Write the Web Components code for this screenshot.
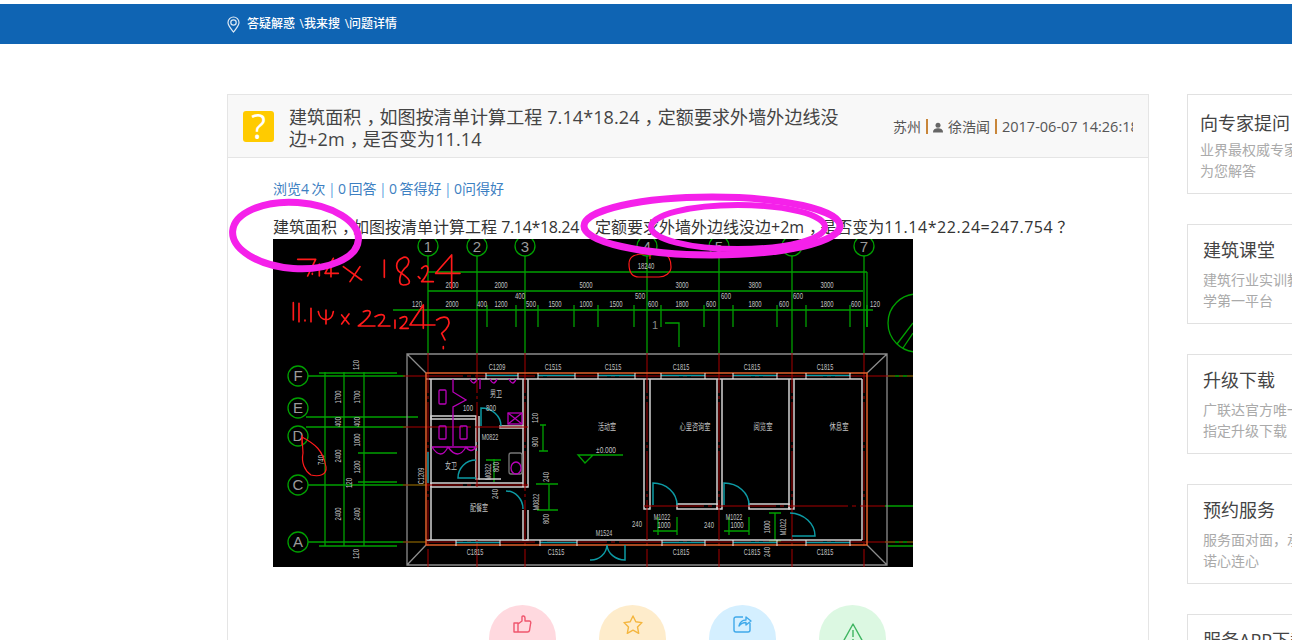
<!DOCTYPE html>
<html lang="zh-CN">
<head>
<meta charset="utf-8">
<title>问题详情</title>
<style>
  html, body { margin: 0; height: 640px; overflow: hidden; background: #fff; }
  body { font-family: "Open Sans", "Noto Sans CJK SC", sans-serif; }
  .page { display: flex; gap: 38px; padding: 50px 0 0 227px; }
  /* this site's full width punctuation sits in the middle of its box */
  .p { margin-left: 5px; margin-right: -5px; }
  .q { margin-left: 4px; margin-right: -4px; }
  .tight { letter-spacing: -.35px; }
  .wide { letter-spacing: .55px; }
</style>
</head>
<body>
<site-bar>答疑解惑 \我来搜 \问题详情</site-bar>
<div class="page">
  <question-card>
    <span slot="title">建筑面积<span class="p">，</span>如图按清单计算工程 7.14*18.24<span class="p">，</span>定额要求外墙外边线没边+2m<span class="p">，</span>是否变为11.14</span>
    <span slot="city">苏州</span>
    <span slot="user">徐浩闻</span>
    <span slot="date">2017-06-07 14:26:18</span>
    <span slot="body">建筑面积<span class="p">，</span>如图按清单计算工程 <span class="tight">7.14*18.24</span><span class="p">，</span>定额要求外墙外边线没边+2m<span class="p">，</span>是否变为<span class="wide">11.14*22.24=247.754</span><span class="q">？</span></span>
  </question-card>
  <side-list>
    <side-card style="--inset:12px;--top:16px"><span slot="title">向专家提问</span>业界最权威专家<br>为您解答</side-card>
    <side-card><span slot="title">建筑课堂</span>建筑行业实训教<br>学第一平台</side-card>
    <side-card><span slot="title">升级下载</span>广联达官方唯一<br>指定升级下载</side-card>
    <side-card><span slot="title">预约服务</span>服务面对面，承<br>诺心连心</side-card>
    <side-card><span slot="title">服务APP下载</span></side-card>
  </side-list>
</div>

<script>
class SiteBar extends HTMLElement {
  connectedCallback() {
    this.attachShadow({ mode: 'open' });
    this.shadowRoot.innerHTML = `
      <style>
        :host {
          display: flex;
          align-items: center;
          gap: 7px;
          height: 40px;
          margin-top: 4px;
          padding-left: 227px;
          background: #0f64b3;
          color: #fff;
          font: 500 12px/1 "Open Sans", "Noto Sans CJK SC", sans-serif;
          word-spacing: 1.500px;
        }
        svg { width: 13px; height: 17px; fill: none; stroke: #dfeaf5; stroke-width: 1.2; }
      </style>
      <svg viewBox="0 0 13 17">
        <path d="M6.5 16C4 12.5 1 9.800 1 6.500a5.500 5.500 0 0 1 11 0C12 9.800 9 12.500 6.500 16z"/>
        <circle cx="6.500" cy="6.500" r="2.700"/>
      </svg>
      <slot></slot>
    `;
  }
}
customElements.define('site-bar', SiteBar);

class StatLine extends HTMLElement {
  connectedCallback() {
    this.attachShadow({ mode: 'open' });
    this.shadowRoot.innerHTML = `
      <style>
        :host { display: block; color: #3d80c2; font-size: 14px; line-height: 20px; word-spacing: -1.200px; }
        i { font-style: normal; color: #5aa2e0; }
      </style>
      浏览4 次 <i>|</i> 0 回答 <i>|</i> 0 答得好 <i>|</i> 0问得好
    `;
  }
}
customElements.define('stat-line', StatLine);

// the floor plan from the question, drawn on its own 640x328 canvas
class CadDrawing extends HTMLElement {
  connectedCallback() {
    const G = '#00a000', W = '#d2d2d2', R = '#a80000', T = '#0d9aa4', M = '#b800b8', H = '#ff1a1a';
    const axes = [155, 204, 252, 374, 446, 519, 591];
    const rows = [['F', 137], ['E', 169], ['D', 197], ['C', 246], ['A', 303]];
    const label = (s, x, y, w, vert) => `<text x="${x}" y="${y + 3}" textLength="${w}" lengthAdjust="spacingAndGlyphs"${vert ? ` transform="rotate(-90 ${x} ${y})"` : ''}>${s}</text>`;
    const dims = [
      ['2000',179,46],['2000',228,46],['5000',313,46],['3000',409,46],['3800',482,46],['3000',554,46],
      ['120',144,65],['2000',179,65],['400',209,65],['1200',228,65],['500',258,65],['1500',282,65],['1000',313,65],['1500',343,65],
      ['600',380,65],['1800',409,65],['600',438,65],['1800',482,65],['600',511,65],['1800',554,65],['600',583,65],['120',602,65],
      ['400',247,57],['500',367,57],['600',453,57],['600',525,57],['18240',373,27],
      ['C1209',224,128],['C1515',280,128],['C1515',340,128],['C1815',408,128],['C1815',479,128],['C1815',552,128],
      ['C1815',202,313],['C1515',283,313],['C1815',408,313],['C1815',479,313],['C1815',552,313],
      ['M1022',389,278],['1000',391,286],['240',364,285],['M1022',461,278],['1000',464,286],['240',436,286],['M1524',331,294],
      ['M0822',217,198],['100',195,169],['800',218,169],['±0.000',333,211]
    ];
    const vdims = [
      ['120',83,126],['1700',65,158],['1700',84,158],['400',65,183],['400',84,183],['2400',65,217],['1000',84,201],['1200',84,228],
      ['120',76,244],['2400',65,275],['2400',84,275],['120',83,315],['740',48,221],['M0822',215,233],['800',223,228],['C1209',148,237],
      ['120',262,179],['900',262,203],['240',273,238],['240',222,255],['M0822',263,263],['800',273,280],['M1022',510,288],['1000',494,288],['240',494,313]
    ];
    const rooms = [['男卫',223,155,12],['女卫',178,227,12],['配餐室',206,269,18],['活动室',334,188,18],['心里咨询室',422,188,31],['阅览室',490,188,19],['休息室',566,188,19]];
    const ticks = [214, 243, 265, 301, 325, 361, 388, 431, 460, 504, 533, 577, 594];
    const windows = [[213,245,134],[265,302,134],[325,362,134],[388,432,134],[460,504,134],[533,577,134],[183,227,301],[267,304,301],[389,432,301],[460,504,301],[533,577,301]];
    this.attachShadow({ mode: 'open' });
    this.shadowRoot.innerHTML = `
      <style>
        :host { display: block; width: 640px; height: 328px; background: #000; overflow: hidden; }
        svg { display: block; }
        text { font: 9px "Liberation Sans", "Noto Sans CJK SC", sans-serif; fill: #c4c4c4; text-anchor: middle; }
        .big text { font-size: 15px; fill: #9a9a9a; }
      </style>
      <svg width="640" height="328" viewBox="0 0 640 328" fill="none">
        <g stroke="${G}" stroke-width="1.300">
          ${axes.map(x => `<circle cx="${x}" cy="7" r="10"/><path d="M${x} 17V114"/>`).join('')}
          <path d="M155 33H594M155 52H590M120 71H600M594 33V88"/>
          ${ticks.map(x => `<path d="M${x} 66V88"/>`).join('')}
          <path d="M392 84H406V108M52 133V307M71 133V307M91 133V307M46 134H124M35 137H132M46 307H124"/>
          <path d="M33 178H145M33 188H133M85 214H124M85 243H124M35 246H153M35 303H153"/>
          <path d="M615 137H640M612 267H640M612 303H640M615 307H640M267 186H273M270 186V212M266 212H275M263 245H285M276 245V271M264 271H285"/>
          <path d="M380 292H404M385 278V296M404 278V296M451 292H476M456 278V296M476 278V296M496 274H508M502 274V302M496 302H508"/>
          <path d="M221 220V243M213 221H228M350 216H305L312 224L320 216"/>
          <circle cx="644" cy="84" r="29"/><path d="M624 105L640 84M630 109L640 94"/>
        </g>
        <g class="big">
          ${axes.map((x, i) => `<text x="${x}" y="13">${i + 1}</text>`).join('')}
          ${rows.map(r => `<text x="25" y="${r[1] + 5}">${r[0]}</text>`).join('')}
        </g>
        <g stroke="${G}" stroke-width="1.300">${rows.map(r => `<circle cx="25" cy="${r[1]}" r="10"/>`).join('')}</g>
        <path d="M134 115H614V326H134ZM134 115L153 134M614 115L594 134M134 326L153 306M614 326L594 306" stroke="#8c8c8c" stroke-width="1.300"/>
        <g stroke="${W}" stroke-width="1.500">
          <path d="M158 140V301M589 140V301"/>
          <path d="M153 140H589M153 301H589"/>
          <path d="M371 140V270H377V140M444 140V270H449V140M516 140V270H521V140"/>
          <path d="M404 265H444V270H404ZM476 265H516V270H476Z"/>
          <path d="M158 244H250V248H158ZM250 140V248H255V140M250 271V301H255V271"/>
          <path d="M158 177H203V180H158ZM203 177V240H206V177M227 187H250V189H227Z"/>
          <path d="M206 240H228"/>
        </g>
        <g stroke="${R}" stroke-width="1">
          <path d="M155 114V328M252 114V328M204 114V248M204 301V328M374 114V328M446 114V328M519 114V328M591 114V328" stroke-dasharray="40 3 3 3"/>
          <path d="M130 137H640M130 188H255M130 246H255M130 303H640M371 267H612" stroke-dasharray="60 4 4 4"/>
        </g>
        <path d="M153 134H594V306H153Z" stroke="#e0602a" stroke-width="1.500"/>
        <g stroke="${T}" stroke-width="1.500">
          ${windows.map(w => `<path d="M${w[0]} ${w[2] + 2.500}H${w[1]}"/>`).join('')}
          <path d="M155 213V244"/>
          <path d="M380 266V244A24 22 0 0 1 404 266M451 266V244A25 22 0 0 1 476 266M517 274A26 23 0 0 1 542 297H519"/>
          <path d="M208 187V169A20 18 0 0 1 228 187M203 221A18 18 0 0 0 185 239H203M233 252A17 18 0 0 1 250 270"/>
          <path d="M334 306A16 16 0 0 1 317 321M334 306A18 16 0 0 0 352 321V306"/>
        </g>
        <g stroke="#e8e8e8" stroke-width="1">
          ${windows.map(w => `<path d="M${w[0]} ${w[2]}v6M${w[1]} ${w[2]}v6"/>`).join('')}
        </g>
        <g stroke="${M}" stroke-width="1.300">
          <rect x="166" y="151" width="7" height="14" rx="1"/><rect x="166" y="187" width="7" height="13" rx="1"/><rect x="187" y="187" width="7" height="13" rx="1"/>
          <path d="M180 140V153L193 161L180 168V180M180 180V207M159 208H203M159 208Q168 222 175 208Q185 222 193 208Q198 215 203 208"/>
          <path d="M197 140q4 8 7 0M217 140q4 8 7 0M236 140q4 8 7 0M207 140V150"/>
          <rect x="235" y="174" width="14" height="11"/><path d="M235 174L249 185M249 174L235 185"/>
          <rect x="236" y="214" width="13" height="21" rx="2" stroke="#777"/><ellipse cx="243" cy="229" rx="5" ry="6"/>
        </g>
        <g>
          ${dims.map(d => label(d[0], d[1], d[2], d[0].length * 3.300)).join('')}
          ${vdims.map(d => label(d[0], d[1], d[2], d[0].length * 3.300, true)).join('')}
          ${rooms.map(r => label(r[0], r[1], r[2], r[3])).join('')}
          <text x="382" y="90" style="font-size:11px;fill:#888">1</text>
        </g>
        <path d="M29 198C42 205 50 211 53 228C54 236 46 238 38 236C32 232 28 224 30 214Z" stroke="${H}" stroke-width="1.200"/>
        <path d="M29 196V206" stroke="${H}"/>
        <path d="M356 25C356 17 362 15 372 15H390C397 16 398 22 398 28C398 34 392 38 386 38H366C358 38 356 32 356 25ZM377 15V20" stroke="${H}" stroke-width="1.200"/>
        <g transform="translate(-48 -69) scale(.3333)" stroke="${H}" stroke-width="5" stroke-linecap="round" stroke-linejoin="round">
          <path d="M218 268H272L248 318M262 310v3M283 282V318M325 265L300 310H340M318 285V320M355 290L410 330M405 290L375 335"/>
          <path d="M478 270V322M530 265C510 275 510 300 530 310C560 330 560 345 535 345C515 345 525 305 545 290C560 270 545 255 530 265"/>
          <path d="M580 320l5 5M590 295C610 275 620 300 590 335H625M680 255L632 310H705M680 255V355"/>
          <path d="M205 398V450M222 400V455M240 450v3M258 415V455M280 425C285 455 320 460 325 425M303 420V462M350 435L372 462M372 432L350 462"/>
          <path d="M415 425C440 415 450 430 400 468H450M450 440C480 425 490 440 460 468H495M510 450V475M525 445C550 430 555 450 525 475H550M595 405L555 465H630M595 405V475"/>
          <path d="M635 450C670 425 690 460 650 490L660 510M655 530v6"/>
        </g>
      </svg>
    `;
  }
}
customElements.define('cad-drawing', CadDrawing);

class ActionCircle extends HTMLElement {
  connectedCallback() {
    const kinds = {
      like: ['#ffd9df', '#f0566e', '<path d="M1 8H5V17H1ZM5 9L9 6V2C9 .5 12 .5 12 3V6H16.500C18 6 18 8 17.500 9L16.500 15.500C16.300 16.500 15.500 17 14.500 17H5"/>'],
      star: ['#feeccb', '#f4b63f', '<path d="M10 1L12.800 6.800L19 7.600L14.500 12L15.700 18.300L10 15.200L4.300 18.300L5.500 12L1 7.600L7.200 6.800Z"/>'],
      share: ['#d4efff', '#3fa9ea', '<path d="M10 2H3C1.800 2 1 2.800 1 4V15C1 16.200 1.800 17 3 17H15C16.200 17 17 16.200 17 15V8M6 11C7 7 10 5 13 5V2L18 6L13 10V7.500C10 7.500 8 8.500 6 11Z"/>'],
      warn: ['#dcf8e2', '#3fb561', '<path d="M11 2L1 20H21ZM11 8V15M11 17V18.500"/>']
    };
    const k = kinds[this.getAttribute('kind')];
    this.attachShadow({ mode: 'open' });
    this.shadowRoot.innerHTML = `
      <style>
        :host {
          display: flex;
          justify-content: center;
          align-items: flex-start;
          width: 67px;
          height: 67px;
          padding-top: 10px;
          box-sizing: border-box;
          border-radius: 50%;
          background: ${k[0]};
        }
        :host([kind=warn]) { padding-top: 17px; }
        svg { width: 20px; height: 20px; fill: none; stroke: ${k[1]}; stroke-width: 1.400; stroke-linejoin: round; }
        :host([kind=warn]) svg { width: 22px; height: 22px; }
      </style>
      <svg viewBox="0 0 ${this.getAttribute('kind') === 'warn' ? 22 : 20} ${this.getAttribute('kind') === 'warn' ? 22 : 20}">${k[2]}</svg>
    `;
  }
}
customElements.define('action-circle', ActionCircle);

// the hand-drawn magenta rings lie over the text and the picture
class InkMarks extends HTMLElement {
  connectedCallback() {
    this.attachShadow({ mode: 'open' });
    this.shadowRoot.innerHTML = `
      <style>
        :host { display: block; position: absolute; left: 0; top: 0; pointer-events: none; }
        svg { display: block; overflow: visible; }
      </style>
      <svg width="640" height="100" fill="none" stroke="#f521ea">
        <ellipse cx="22.500" cy="36.500" rx="63" ry="33" stroke-width="7" transform="rotate(4 22.500 36.500)"/>
        <ellipse cx="439" cy="27" rx="128" ry="29" stroke-width="7"/>
        <ellipse cx="465" cy="28" rx="87" ry="22" stroke-width="6"/>
      </svg>
    `;
  }
}
customElements.define('ink-marks', InkMarks);

class QuestionCard extends HTMLElement {
  connectedCallback() {
    this.attachShadow({ mode: 'open' });
    this.shadowRoot.innerHTML = `
      <style>
        :host {
          display: block;
          flex: none;
          width: 922px;
          box-sizing: border-box;
          border: 1px solid #e5e5e5;
          color: #333;
        }
        header {
          display: flex;
          align-items: center;
          height: 62px;
          padding: 0 15px;
          background: #f8f8f8;
          border-bottom: 1px solid #e5e5e5;
        }
        .mark {
          flex: none;
          width: 31px;
          height: 31px;
          margin-right: 15px;
          border-radius: 3px;
          background: #ffcb00;
          color: #fff;
          font: 400 34px/31px "Open Sans", sans-serif;
          text-align: center;
        }
        h1 {
          flex: none;
          width: 556px;
          margin: 4px 48px 0 0;
          font-size: 18px;
          font-weight: 400;
          line-height: 22px;
          letter-spacing: .1px;
          color: #444;
        }
        .meta {
          flex: 1;
          min-width: 0;
          overflow: hidden;
          white-space: nowrap;
          font-size: 14px;
          color: #555;
        }
        .meta i { display: inline-block; width: 2px; height: 15px; margin: 0 5px; background: #c8863a; vertical-align: -2px; }
        .meta svg { width: 10px; height: 11px; margin-right: 5px; fill: #666; vertical-align: -1px; }
        .date { font-size: 14.500px; }
        .content { position: relative; padding: 21px 45px 0; height: 520px; }
        .text { font-size: 16px; line-height: 24px; height: 24px; white-space: nowrap; color: #333; }
        .actions { display: flex; gap: 43px; margin: 38px 0 0 216px; }
        .wrap { position: relative; padding-top: 16px; }
      </style>
      <header>
        <div class="mark">?</div>
        <h1><slot name="title"></slot></h1>
        <div class="meta"><slot name="city"></slot><i></i><svg viewBox="0 0 12 12"><circle cx="6" cy="3.200" r="3"/><path d="M0 12C0 8 3 7 6 7S12 8 12 12Z"/></svg><slot name="user"></slot><i></i><span class="date"><slot name="date"></slot></span></div>
      </header>
      <div class="content">
        <stat-line></stat-line>
        <div class="wrap">
          <div class="text"><slot name="body"></slot></div>
          <cad-drawing></cad-drawing>
          <ink-marks></ink-marks>
        </div>
        <div class="actions">
          <action-circle kind="like"></action-circle>
          <action-circle kind="star"></action-circle>
          <action-circle kind="share"></action-circle>
          <action-circle kind="warn"></action-circle>
        </div>
      </div>
    `;
  }
}
customElements.define('question-card', QuestionCard);

class SideList extends HTMLElement {
  connectedCallback() {
    this.attachShadow({ mode: 'open' });
    this.shadowRoot.innerHTML = `
      <style>
        :host { display: flex; flex: none; flex-direction: column; gap: 30px; width: 300px; }
      </style>
      <slot></slot>
    `;
  }
}
customElements.define('side-list', SideList);

class SideCard extends HTMLElement {
  connectedCallback() {
    this.attachShadow({ mode: 'open' });
    this.shadowRoot.innerHTML = `
      <style>
        :host {
          display: block;
          height: 100px;
          box-sizing: border-box;
          padding: var(--top, 13px) var(--inset, 15px) 0;
          border: 1px solid #e1e1e1;
          color: #aaa;
          font-size: 14px;
          line-height: 21px;
        }
        h2 { margin: 0 0 calc(20px - var(--top, 13px)); font-size: 18px; font-weight: 400; line-height: 24px; color: #444; }
      </style>
      <h2><slot name="title"></slot></h2>
      <slot></slot>
    `;
  }
}
customElements.define('side-card', SideCard);
</script>
</body>
</html>
